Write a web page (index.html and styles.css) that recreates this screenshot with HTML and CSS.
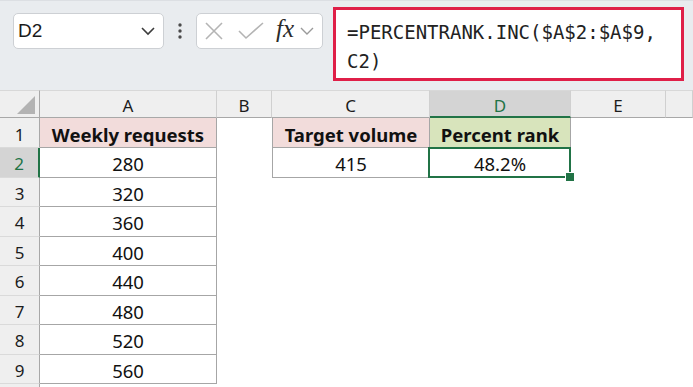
FILE: index.html
```html
<!DOCTYPE html>
<html lang="en">
<head>
    <meta charset="UTF-8">
    <title>PERCENTRANK.INC</title>
    <link rel="stylesheet" href="styles.css">
</head>
<body>
<div class="toolbar">
    <div class="nameBox">
        <span>D2</span>
        <svg width="16" height="10" viewBox="0 0 16 10"><polyline points="2,2 8,8 14,2" fill="none" stroke="#3c3c3c" stroke-width="1.6"/></svg>
    </div>
    <div class="dots">
        <svg width="6" height="16" viewBox="0 0 6 16"><circle cx="3" cy="2" r="1.7"/><circle cx="3" cy="8" r="1.7"/><circle cx="3" cy="14" r="1.7"/></svg>
    </div>
    <div class="fxBox">
        <svg width="18" height="18" viewBox="0 0 18 18"><path d="M1 1 L17 17 M17 1 L1 17" stroke="#b4b4b4" stroke-width="1.6" fill="none"/></svg>
        <svg width="26" height="18" viewBox="0 0 26 18"><polyline points="1,9 8,16 25,1" stroke="#b4b4b4" stroke-width="1.6" fill="none"/></svg>
        <span class="fx">fx</span>
        <svg width="14" height="8" viewBox="0 0 14 8"><polyline points="1,1 7,7 13,1" fill="none" stroke="#9a9a9a" stroke-width="1.4"/></svg>
    </div>
    <div class="formula">=PERCENTRANK.INC($A$2:$A$9, C2)</div>
</div>

<div class="sheet">
    <!-- 表头 -->
    <div class="corner"><svg width="40" height="28" viewBox="0 0 40 28"><polygon points="17,23 35,5 35,23" fill="#b3b3b3"/></svg></div>
    <div class="colHead">A</div>
    <div class="colHead">B</div>
    <div class="colHead">C</div>
    <div class="colHead sel">D</div>
    <div class="colHead">E</div>
    <div class="colHead"></div>

    <div class="rowHead">1</div>
    <div class="cell bd pink bold">Weekly requests</div>
    <div class="cell"></div>
    <div class="cell bd left pink bold">Target volume</div>
    <div class="cell bd green bold">Percent rank</div>
    <div class="cell"></div>
    <div class="cell"></div>

    <div class="rowHead sel">2</div>
    <div class="cell bd">280</div>
    <div class="cell"></div>
    <div class="cell bd left">415</div>
    <div class="cell bd active">48.2%</div>
    <div class="cell"></div>
    <div class="cell"></div>

    <div class="rowHead">3</div>
    <div class="cell bd">320</div>
    <div class="cell"></div><div class="cell"></div><div class="cell"></div><div class="cell"></div><div class="cell"></div>

    <div class="rowHead">4</div>
    <div class="cell bd">360</div>
    <div class="cell"></div><div class="cell"></div><div class="cell"></div><div class="cell"></div><div class="cell"></div>

    <div class="rowHead">5</div>
    <div class="cell bd">400</div>
    <div class="cell"></div><div class="cell"></div><div class="cell"></div><div class="cell"></div><div class="cell"></div>

    <div class="rowHead">6</div>
    <div class="cell bd">440</div>
    <div class="cell"></div><div class="cell"></div><div class="cell"></div><div class="cell"></div><div class="cell"></div>

    <div class="rowHead">7</div>
    <div class="cell bd">480</div>
    <div class="cell"></div><div class="cell"></div><div class="cell"></div><div class="cell"></div><div class="cell"></div>

    <div class="rowHead">8</div>
    <div class="cell bd">520</div>
    <div class="cell"></div><div class="cell"></div><div class="cell"></div><div class="cell"></div><div class="cell"></div>

    <div class="rowHead">9</div>
    <div class="cell bd">560</div>
    <div class="cell"></div><div class="cell"></div><div class="cell"></div><div class="cell"></div><div class="cell"></div>

    <div class="rowHead"></div>
    <div class="cell"></div>
    <div class="cell"></div><div class="cell"></div><div class="cell"></div><div class="cell"></div><div class="cell"></div>
</div>
</body>
</html>
```

FILE: styles.css
```css
*{
    margin: 0;
    padding: 0;
    box-sizing: border-box;
}
body
{
    width: 693px;
    height: 387px;
    overflow: hidden;
    background: #fff;
    font-family: "Noto Sans", "Open Sans", sans-serif;
    color: #111;
}
/* 编辑栏 */
.toolbar
{
    height: 90px;
    background: #e9ecef;
    border-top: 1px solid #dcdfe3;
    display: flex;
    align-items: flex-start;
    padding-left: 13px;
}
.nameBox
{
    width: 151px;
    height: 36px;
    margin-top: 12px;
    background: #fff;
    border: 1px solid #cdd0d4;
    border-radius: 5px;
    display: flex;
    align-items: center;
    justify-content: space-between;
    padding: 0 7px 0 4px;
    font-family: "Liberation Sans", sans-serif;
    font-size: 19px;
    color: #1a1a1a;
}
.dots
{
    width: 32px;
    height: 36px;
    margin-top: 12px;
    display: flex;
    align-items: center;
    justify-content: center;
    fill: #4a4a4a;
}
.fxBox
{
    width: 127px;
    height: 36px;
    margin-top: 12px;
    background: #fff;
    border: 1px solid #cdd0d4;
    border-radius: 5px;
    display: flex;
    align-items: center;
    padding-left: 8px;
}
.fxBox svg:first-child
{
    margin-right: 15px;
}
.fxBox svg:nth-child(2)
{
    margin-right: 12px;
}
.fx
{
    font-family: "Liberation Serif", "DejaVu Serif", serif;
    font-style: italic;
    font-size: 25px;
    color: #2a2a2a;
    margin-right: 6px;
    margin-top: -4px;
}
.formula
{
    width: 351px;
    height: 74px;
    margin-top: 6px;
    margin-left: 10px;
    background: #fff;
    border: 3px solid #df1f48;
    padding: 8px 8px 0 11px;
    font-family: "DejaVu Sans Mono", "Liberation Mono", monospace;
    font-size: 19px;
    line-height: 29px;
    color: #222;
}
/* 表格 */
.sheet
{
    display: grid;
    grid-template-columns: 40px 177px 55px 158px 141px 95px 1fr;
    grid-template-rows: 28px 30px repeat(8, 29.5px) 3px;
    font-size: 18.5px;
}
.corner
{
    background: #efefef;
    border-right: 1px solid #a8a8a8;
    border-bottom: 1px solid #a8a8a8;
    border-top: 1px solid #d8d8d8;
}
.colHead
{
    background: #efefef;
    border-top: 1px solid #d8d8d8;
    border-right: 1px solid #d0d0d0;
    border-bottom: 1px solid #a8a8a8;
    display: flex;
    align-items: center;
    justify-content: center;
    padding-top: 3px;
    font-size: 17px;
    color: #1c1c1c;
}
.colHead.sel
{
    background: #d4d4d4;
    color: #217346;
    border-bottom: 2px solid #217346;
}
.rowHead
{
    background: #efefef;
    border-right: 1px solid #a8a8a8;
    border-bottom: 1px solid #dadada;
    display: flex;
    align-items: center;
    justify-content: center;
    padding-top: 3px;
    font-size: 17px;
    color: #1c1c1c;
}
.rowHead.sel
{
    background: #d4d4d4;
    color: #217346;
    border-right: 2px solid #217346;
}
.cell
{
    display: flex;
    align-items: center;
    justify-content: center;
    padding-top: 3px;
    white-space: nowrap;
}
.bd
{
    border-right: 1px solid #a6a6a6;
    border-bottom: 1px solid #a6a6a6;
}
.left
{
    border-left: 1px solid #a6a6a6;
}
.pink
{
    background: #f2dcdb;
}
.green
{
    background: #d8e4bc;
}
.bold
{
    font-weight: bold;
}
.active
{
    position: relative;
}
.active::after
{
    content: "";
    position: absolute;
    left: -2px;
    top: -1px;
    right: -1px;
    bottom: -1px;
    border: 2px solid #217346;
}
.active::before
{
    content: "";
    position: absolute;
    right: -4px;
    bottom: -4px;
    width: 8px;
    height: 8px;
    background: #217346;
    border-left: 1px solid #fff;
    border-top: 1px solid #fff;
    z-index: 1;
}
```
